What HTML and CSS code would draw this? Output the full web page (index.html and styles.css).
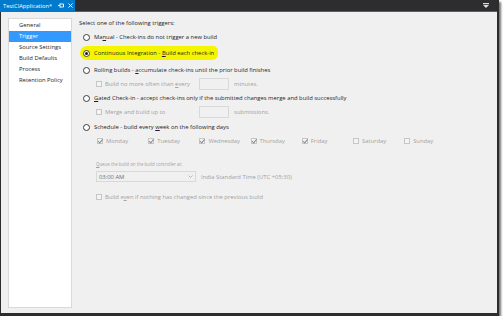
FILE: index.html
```html
<!DOCTYPE html>
<html>
  <head>
    <meta charset="utf-8">
    <title>TestCIApplication - Trigger</title>
    <link rel="stylesheet" href="styles.css">
  </head>
  <body>
    <div class="frame">
      <div class="tabbar">
        <span class="tab">
          <span class="tab-title">TestCIApplication*</span>
          <svg class="tab-pin" width="6" height="5" viewBox="0 0 6 5">
            <path d="M0 2.5h2M2 0.5v4M2 1h3.5v3h-3.5" fill="none" stroke="#fff" stroke-width="0.9"/>
          </svg>
          <svg class="tab-close" width="5" height="5" viewBox="0 0 5 5">
            <path d="M0.5 0.5l4 4M4.5 0.5l-4 4" stroke="#fff" stroke-width="1"/>
          </svg>
        </span>
        <span class="flex"></span>
        <svg class="tab-menu" width="6" height="5" viewBox="0 0 6 5">
          <rect x="0" y="0" width="6" height="1.2" fill="#ddd"/>
          <path d="M0 2h6l-3 3z" fill="#ddd"/>
        </svg>
      </div>
      <div class="tabline"></div>

      <div class="panel">
        <ul class="nav">
          <li>General</li>
          <li class="selected">Trigger</li>
          <li>Source Settings</li>
          <li>Build Defaults</li>
          <li>Process</li>
          <li>Retention Policy</li>
        </ul>

        <div class="content">
          <div class="row title">Select one of the following triggers:</div>

          <div class="row r-manual">
            <span class="radio"></span>
            <span>Ma<u>n</u>ual - Check-ins do not trigger a new build</span>
          </div>

          <div class="row r-ci">
            <span class="highlight"></span>
            <span class="radio checked"></span>
            <span class="ci-text">Continuous Integration - <u>B</u>uild each check-in</span>
          </div>

          <div class="row r-rolling">
            <span class="radio"></span>
            <span>Rolling builds - <u>a</u>ccumulate check-ins until the prior build finishes</span>
          </div>

          <div class="row sub r-every">
            <span class="check"></span>
            <span class="label-fixed">Build no more often than <u>e</u>very</span>
            <span class="textbox"></span>
            <span>minutes.</span>
          </div>

          <div class="row r-gated">
            <span class="radio"></span>
            <span><u>G</u>ated Check-in - accept check-ins only if the submitted changes merge and build successfully</span>
          </div>

          <div class="row sub r-merge">
            <span class="check"></span>
            <span class="label-fixed">Merge and build up to</span>
            <span class="textbox"></span>
            <span>submissions.</span>
          </div>

          <div class="row r-schedule">
            <span class="radio"></span>
            <span>Schedule - build every <u>w</u>eek on the following days</span>
          </div>

          <div class="row sub days">
            <span class="day"><span class="check on"></span>Monday</span>
            <span class="day"><span class="check on"></span>Tuesday</span>
            <span class="day"><span class="check on"></span>Wednesday</span>
            <span class="day"><span class="check on"></span>Thursday</span>
            <span class="day"><span class="check on"></span>Friday</span>
            <span class="day"><span class="check"></span>Saturday</span>
            <span class="day"><span class="check"></span>Sunday</span>
          </div>

          <div class="row sub r-queue"><span><u>Q</u>ueue the build on the build controller at:</span></div>

          <div class="row sub r-combo">
            <span class="combo">
              <span class="flex">03:00 AM</span>
              <svg width="5" height="3" viewBox="0 0 5 3">
                <path d="M0.5 0.5l2 2 2-2" fill="none" stroke="#a8a8a8" stroke-width="0.8"/>
              </svg>
            </span>
            <span>India Standard Time (UTC +05:30)</span>
          </div>

          <div class="row sub r-even">
            <span class="check"></span>
            <span>Build e<u>v</u>en if nothing has changed since the previous build</span>
          </div>
        </div>
      </div>
    </div>
  </body>
</html>
```

FILE: styles.css
```css
body, html {
  margin: 0;
  background: #fff;
}
body {
  font-family: "Open Sans", "Noto Sans", sans-serif;
  font-size: 5.85px;
  color: #1e1e1e;
}
u {
  text-decoration-thickness: 0.5px;
  text-underline-offset: 1px;
}
.flex {
  flex: 1;
}
.frame {
  width: 499px;
  height: 316px;
  background: #2d2d30;
  box-shadow: 2px 2px 2px rgba(0, 0, 0, 0.55);
  display: flex;
  flex-direction: column;
}
.tabbar {
  height: 11px;
  display: flex;
  align-items: center;
}
.tab {
  height: 11px;
  width: 75px;
  box-sizing: border-box;
  padding: 0 2px 0 3px;
  background: #007acc;
  color: #fff;
  font-size: 5.7px;
  display: flex;
  align-items: center;
}
.tab-title {
  flex: 1;
  overflow: hidden;
}
.tab-pin {
  margin-right: 4px;
  flex: none;
}
.tab-close {
  flex: none;
}
.tab-menu {
  margin-right: 10px;
}
.tabline {
  height: 1px;
  background: #007acc;
  margin-right: 2px;
}
.panel {
  flex: 1;
  margin: 0 2px 3px 1px;
  background: #f0f0f0;
  padding: 6px 0 5px 7px;
  display: flex;
}
.nav {
  list-style: none;
  margin: 0;
  padding: 1px 0 0;
  width: 64px;
  box-sizing: border-box;
  background: #fff;
  border: 1px solid #d9d9d9;
  flex: none;
}
.nav li {
  height: 11px;
  line-height: 11px;
  padding-left: 10px;
  white-space: nowrap;
}
.nav .selected {
  background: #3399ff;
  color: #fff;
}
.content {
  flex: 1;
  padding-left: 7px;
  display: flex;
  flex-direction: column;
}
.row {
  height: 10px;
  display: flex;
  align-items: center;
  white-space: nowrap;
  position: relative;
}
.row.sub {
  padding-left: 17px;
  color: #a2a2a2;
}
.r-manual { margin-top: 4px; }
.r-ci { margin-top: 6px; }
.r-rolling { margin-top: 7px; }
.r-every { margin-top: 3px; height: 12px; }
.r-gated { margin-top: 3px; }
.r-merge { margin-top: 3px; height: 12px; }
.r-schedule { margin-top: 4px; }
.row.days { margin-top: 4px; padding-left: 18px; }
.r-queue { margin-top: 13px; font-size: 4.4px; }
.r-combo { margin-top: 2px; height: 11px; }
.r-even { margin-top: 10px; }

.radio {
  width: 7px;
  height: 7px;
  box-sizing: border-box;
  border: 1px solid #3c3c3c;
  border-radius: 50%;
  background: #fff;
  margin: 0 4px 0 4px;
  position: relative;
  flex: none;
}
.radio.checked::after {
  content: "";
  position: absolute;
  left: 1px;
  top: 1px;
  width: 3px;
  height: 3px;
  border-radius: 50%;
  background: #1e1e1e;
}
.ci-text {
  position: relative;
}
.row .highlight {
  position: absolute;
  left: 1px;
  top: -2px;
  width: 138px;
  height: 14px;
  border-radius: 7px 5px 6px 7px;
  background: #f5f500;
}
.check {
  width: 6px;
  height: 6px;
  box-sizing: border-box;
  border: 1px solid #c6c6c6;
  background: #f4f4f4;
  margin-right: 3px;
  position: relative;
  flex: none;
}
.check.on::after {
  content: "";
  position: absolute;
  left: 1px;
  top: -1px;
  width: 1.5px;
  height: 3.5px;
  border: solid #8c8c8c;
  border-width: 0 1px 1px 0;
  transform: rotate(40deg);
}
.label-fixed {
  width: 94px;
}
.textbox {
  width: 30px;
  height: 12px;
  box-sizing: border-box;
  border: 1px solid #d9d9d9;
  background: #f0f0f0;
  margin-right: 5px;
  flex: none;
}
.day {
  width: 51.2px;
  display: flex;
  align-items: center;
}
.combo {
  width: 100px;
  height: 11px;
  box-sizing: border-box;
  border: 1px solid #d9d9d9;
  background: #f0f0f0;
  color: #6e6e6e;
  display: flex;
  align-items: center;
  padding: 0 2px;
  margin-right: 5px;
  flex: none;
}
```
